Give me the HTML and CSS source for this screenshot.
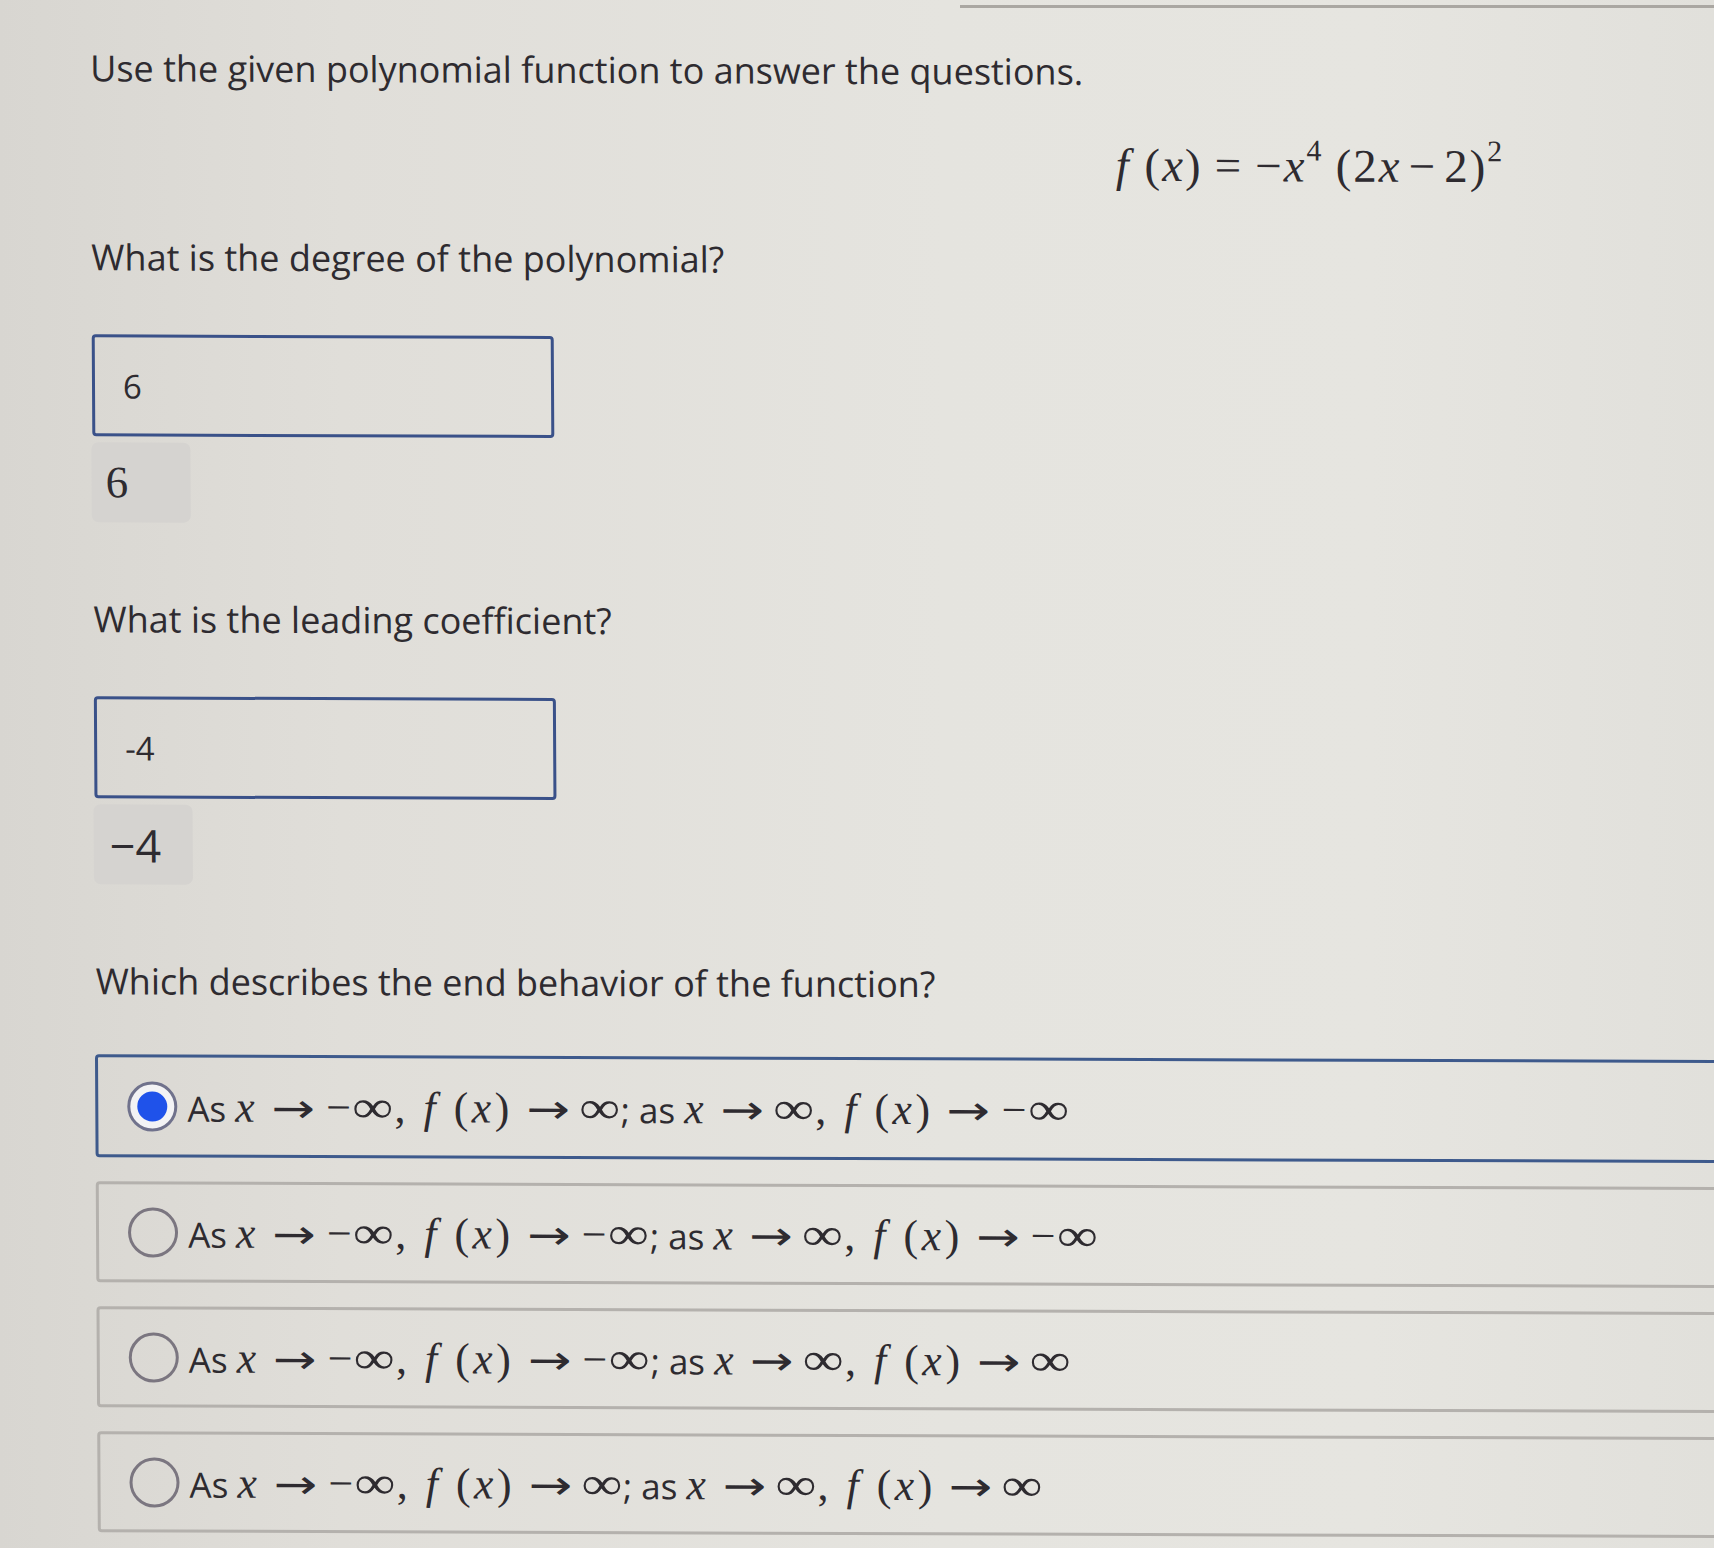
FILE: index.html
```html
<!DOCTYPE html>
<html lang="en">
<head>
<meta charset="utf-8">
<title>Polynomial function questions</title>
<link rel="stylesheet" href="styles.css">
</head>
<body>
<div class="topbar"></div>
<main class="page">
  <p class="title">Use the given polynomial function to answer the questions.</p>
  <p class="formula"><i>f</i> (<i>x</i>)<span class="eq">=</span>−<i>x</i><sup class="s4">4</sup>(2<i>x</i><span class="bin">−</span>2)<sup>2</sup></p>

  <p class="question">What is the degree of the polynomial?</p>
  <div class="input">6</div>
  <div class="chip serif">6</div>

  <p class="question q2">What is the leading coefficient?</p>
  <div class="input">-4</div>
  <div class="chip">−4</div>

  <p class="question q3">Which describes the end behavior of the function?</p>
  <div class="options">
    <div class="option selected">
      <span class="radio"><span class="dot"></span></span>
      <span class="otext">As <span class="m"><i>x</i><span class="ar">→</span>−<span class="inf">∞</span>, <i>f</i> (<i>x</i>)<span class="ar">→</span><span class="inf">∞</span></span>; as <span class="m"><i>x</i><span class="ar">→</span><span class="inf">∞</span>, <i>f</i> (<i>x</i>)<span class="ar">→</span>−<span class="inf">∞</span></span></span>
    </div>
    <div class="option">
      <span class="radio"></span>
      <span class="otext">As <span class="m"><i>x</i><span class="ar">→</span>−<span class="inf">∞</span>, <i>f</i> (<i>x</i>)<span class="ar">→</span>−<span class="inf">∞</span></span>; as <span class="m"><i>x</i><span class="ar">→</span><span class="inf">∞</span>, <i>f</i> (<i>x</i>)<span class="ar">→</span>−<span class="inf">∞</span></span></span>
    </div>
    <div class="option">
      <span class="radio"></span>
      <span class="otext">As <span class="m"><i>x</i><span class="ar">→</span>−<span class="inf">∞</span>, <i>f</i> (<i>x</i>)<span class="ar">→</span>−<span class="inf">∞</span></span>; as <span class="m"><i>x</i><span class="ar">→</span><span class="inf">∞</span>, <i>f</i> (<i>x</i>)<span class="ar">→</span><span class="inf">∞</span></span></span>
    </div>
    <div class="option">
      <span class="radio"></span>
      <span class="otext">As <span class="m"><i>x</i><span class="ar">→</span>−<span class="inf">∞</span>, <i>f</i> (<i>x</i>)<span class="ar">→</span><span class="inf">∞</span></span>; as <span class="m"><i>x</i><span class="ar">→</span><span class="inf">∞</span>, <i>f</i> (<i>x</i>)<span class="ar">→</span><span class="inf">∞</span></span></span>
    </div>
  </div>
</main>
</body>
</html>
```
FILE: styles.css
```css
html, body {
  margin: 0;
  padding: 0;
}
body {
  width: 1714px;
  height: 1548px;
  overflow: hidden;
  background: linear-gradient(90deg, #d8d6d1 0%, #e0ded9 20%, #e5e4df 55%, #e6e5e0 80%, #e1e0db 100%);
  color: #2e2b30;
  font-family: "Open Sans", "Noto Sans", sans-serif;
}
.topbar {
  height: 3px;
  margin: 5px 0 0 960px;
  background: #aaa7a2;
}
.page {
  padding-left: 90px;
  transform: skew(0.34deg, 0.2deg);
  transform-origin: 0 0;
}
p { margin: 0; }
.title {
  font-size: 36px;
  line-height: 44px;
  margin-top: 38px;
}
.formula {
  font-family: "Liberation Serif", "Times New Roman", serif;
  font-size: 47px;
  line-height: 50px;
  letter-spacing: 2px;
  margin: 46px 0 0 1025px;
  white-space: nowrap;
}
.formula i { font-style: italic; }
.formula .eq { margin: 0 12px; }
.formula .bin { margin: 0 7px; }
.formula sup {
  font-size: 30px;
  line-height: 0;
  vertical-align: 21px;
}
.formula .s4 { margin-right: 12px; }
.question {
  font-size: 36px;
  line-height: 44px;
  margin-top: 49px;
}
.q2, .q3 { margin-top: 75px; }
.input {
  box-sizing: border-box;
  width: 462px;
  height: 102px;
  margin-top: 55px;
  border: 3px solid #3a5189;
  border-radius: 4px;
  padding-left: 28px;
  display: flex;
  align-items: center;
  font-size: 33px;
}
.chip {
  box-sizing: border-box;
  width: 99px;
  height: 80px;
  margin-top: 6px;
  margin-left: -1px;
  background: #d5d3d0;
  border-radius: 7px;
  padding-left: 16px;
  display: flex;
  align-items: center;
  font-size: 45px;
}
.chip.serif {
  font-family: "Liberation Serif", "Times New Roman", serif;
  font-size: 45px;
  padding-left: 14px;
}
.options {
  margin-top: 51px;
  display: flex;
  flex-direction: column;
  gap: 24px;
}
.option {
  box-sizing: border-box;
  width: 1700px;
  height: 101px;
  margin-left: -1px;
  border: 3px solid #b4b1ad;
  border-radius: 4px;
  padding-left: 29px;
  display: flex;
  align-items: center;
  gap: 10px;
}
.option.selected {
  border-color: #3e5a8c;
  height: 103px;
}
.radio {
  box-sizing: border-box;
  width: 50px;
  height: 50px;
  border-radius: 50%;
  border: 3px solid #7b7680;
  display: flex;
  align-items: center;
  justify-content: center;
  flex: none;
}
.selected .radio {
  border-color: #70728c;
  background: #f3f3f5;
}
.dot {
  width: 30px;
  height: 30px;
  border-radius: 50%;
  background: #1f52ea;
}
.otext {
  font-size: 35px;
  white-space: nowrap;
}
.m {
  font-family: "Liberation Serif", "Times New Roman", serif;
  font-size: 44px;
  letter-spacing: 3.5px;
}
.m i { font-style: italic; }
.ar {
  display: inline-block;
  width: 34px;
  margin: 0 16px 0 18px;
  text-align: center;
  font-family: "DejaVu Sans", sans-serif;
  font-size: 40px;
  letter-spacing: 0;
  transform: scaleX(1.3);
}
.inf {
  display: inline-block;
  font-size: 46px;
  letter-spacing: 0;
  margin: 0 5px 0 2px;
  transform: scaleX(1.25);
}
```
